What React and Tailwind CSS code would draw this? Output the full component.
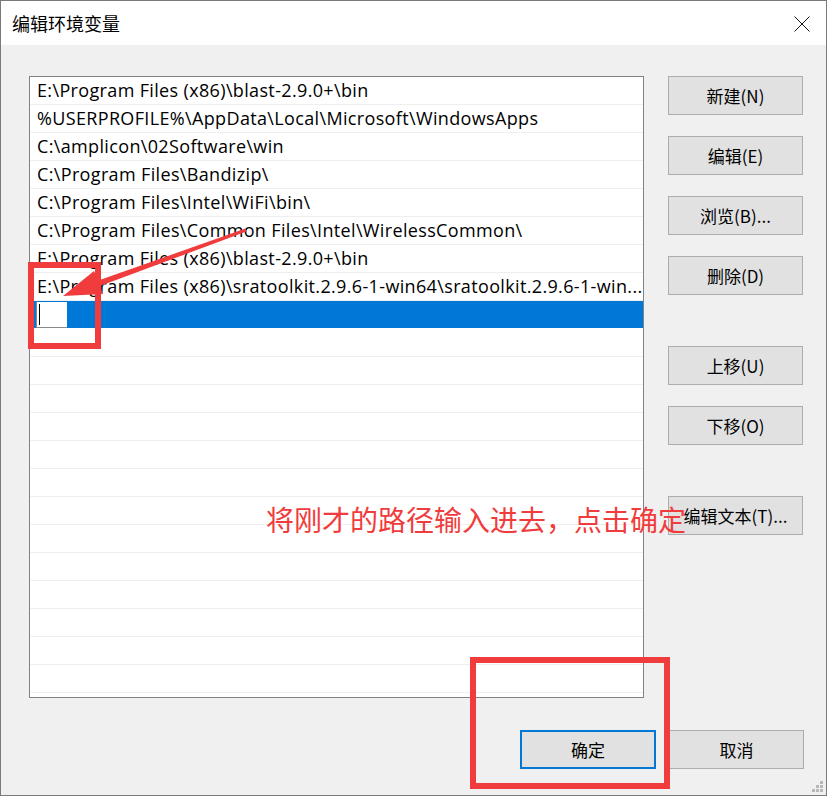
import React from "react";

const FONT = { fontFamily: '"Open Sans", "Noto Sans CJK SC", sans-serif' };
const CJK = { fontFamily: '"Noto Sans CJK SC", "Noto Sans", sans-serif' };

const paths = [
  "E:\\Program Files (x86)\\blast-2.9.0+\\bin",
  "%USERPROFILE%\\AppData\\Local\\Microsoft\\WindowsApps",
  "C:\\amplicon\\02Software\\win",
  "C:\\Program Files\\Bandizip\\",
  "C:\\Program Files\\Intel\\WiFi\\bin\\",
  "C:\\Program Files\\Common Files\\Intel\\WirelessCommon\\",
  "E:\\Program Files (x86)\\blast-2.9.0+\\bin",
  "E:\\Program Files (x86)\\sratoolkit.2.9.6-1-win64\\sratoolkit.2.9.6-1-win...",
];

function Btn({ children, primary }) {
  return (
    <button
      className={`w-[135px] h-[39px] bg-[#e1e1e1] text-[17px] text-black flex items-center justify-center ${primary ? "border-2 border-[#0078d7]" : "border border-[#adadad]"}`}
      style={CJK}
    >
      {children}
    </button>
  );
}

export default function App() {
  const empty = Array.from({ length: 13 });

  return (
    <div className="w-[827px] h-[796px] relative bg-[#f0f0f0] border border-[#7a7a7a] overflow-hidden">
      {/* title bar */}
      <div className="h-[44px] bg-white flex items-center justify-between pl-[11px] pr-[16px]">
        <span className="text-[18px] text-black leading-none" style={CJK}>编辑环境变量</span>
        <svg width="16" height="16" viewBox="0 0 16 16" className="mt-[1px]">
          <path d="M0.5 0.5 L15.5 15.5 M15.5 0.5 L0.5 15.5" stroke="#111" strokeWidth="1" fill="none" />
        </svg>
      </div>

      <div className="pt-[31px] pl-[28px]">
        <div className="flex">
          {/* list */}
          <div className="w-[615px] h-[622px] border border-[#828282] bg-white overflow-hidden text-[18px] tracking-[0.35px] text-black" style={FONT}>
            {paths.map((p, i) => (
              <div key={i} className="h-[28px] border-b border-[#efefef] pl-[7px] leading-[27px] whitespace-nowrap">
                {p}
              </div>
            ))}
            <div className="h-[28px] bg-[#0078d7] flex items-center pl-[6px] border-b border-white">
              <div className="w-[31px] h-[26px] bg-white border-l border-b border-[#8a8a8a] flex items-center pl-[2px]">
                <div className="w-[1px] h-[21px] bg-black" />
              </div>
            </div>
            {empty.map((_, i) => (
              <div key={i} className="h-[28px] border-b border-[#efefef]" />
            ))}
          </div>

          {/* right buttons */}
          <div className="ml-[24px] flex flex-col">
            <Btn>新建(N)</Btn>
            <div className="mt-[21px]"><Btn>编辑(E)</Btn></div>
            <div className="mt-[21px]"><Btn>浏览(B)...</Btn></div>
            <div className="mt-[21px]"><Btn>删除(D)</Btn></div>
            <div className="mt-[51px]"><Btn>上移(U)</Btn></div>
            <div className="mt-[21px]"><Btn>下移(O)</Btn></div>
            <div className="mt-[51px]"><Btn>编辑文本(T)...</Btn></div>
          </div>
        </div>

        <div className="mt-[32px] flex justify-end pr-[22px] gap-[13px]">
          <div className="w-[136px]">
            <button className="w-[136px] h-[39px] bg-[#e1e1e1] border-2 border-[#0078d7] text-[17px] text-black" style={CJK}>确定</button>
          </div>
          <Btn>取消</Btn>
        </div>
      </div>

      {/* annotations */}
      <svg className="absolute left-0 top-0 pointer-events-none" width="827" height="796">
        <polygon
          points="245.5,230.4 92.2,287.6 90.2,282 244.5,227.6"
          fill="#f03c3c"
        />
        <polygon points="62,295 102,293 93,270" fill="#f03c3c" />
      </svg>
      <div className="absolute left-[27px] top-[261px] w-[73px] h-[87px] border-[6px] border-[#f03c3c]" />
      <div className="absolute left-[469px] top-[656px] w-[200px] h-[132px] border-[6px] border-[#f03c3c]" />
      <div className="absolute left-[265px] top-[504px] text-[28px] leading-[28px] text-[#f03c3c] whitespace-nowrap" style={CJK}>
        将刚才的路径输入进去，点击确定
      </div>

      {/* resize grip */}
      <svg className="absolute right-[3px] bottom-[3px]" width="11" height="11">
        <rect x="8" y="0" width="3" height="3" fill="#b8b8b8" />
        <rect x="4" y="4" width="3" height="3" fill="#b8b8b8" />
        <rect x="8" y="4" width="3" height="3" fill="#b8b8b8" />
        <rect x="0" y="8" width="3" height="3" fill="#b8b8b8" />
        <rect x="4" y="8" width="3" height="3" fill="#b8b8b8" />
        <rect x="8" y="8" width="3" height="3" fill="#b8b8b8" />
      </svg>
    </div>
  );
}
